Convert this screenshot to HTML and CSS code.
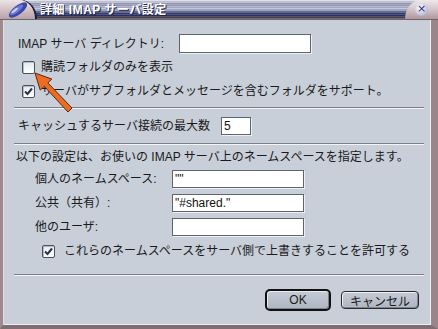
FILE: index.html
```html
<!DOCTYPE html>
<html lang="ja">
  <head>
    <meta charset="UTF-8" />
    <title>詳細 IMAP サーバ設定</title>
    <link rel="stylesheet" href="styles.css">
  </head>
  <body>
    <div class="window">
      <div class="titlebar">
        <div class="title-tab">
          <svg width="26" height="18" viewBox="0 0 26 18">
            <g transform="rotate(-38 13 9)">
              <ellipse cx="13" cy="9" rx="11" ry="4.5" fill="#3a48a8" />
              <ellipse cx="12" cy="8" rx="8" ry="2.6" fill="#6c7ad6" />
              <ellipse cx="10" cy="7.4" rx="4" ry="1.2" fill="#c8d0ff" />
            </g>
          </svg>
        </div>
        <span class="title-text">詳細 IMAP サーバ設定</span>
        <div class="close-tab">
          <span class="close-btn">×</span>
        </div>
      </div>

      <div class="frame">
        <div class="content">
          <div class="row row-dir">
            <label class="lbl lbl-dir" for="dir">IMAP サーバ ディレクトリ:</label>
            <input class="field field-dir" id="dir" type="text" value="" />
          </div>

          <div class="row check-row">
            <span class="check"></span>
            <span class="check-label">購読フォルダのみを表示</span>
          </div>

          <div class="row check-row row-sub">
            <span class="check checked">
              <svg width="11" height="11" viewBox="0 0 11 11">
                <path d="M2 5.5 L4.5 8 L9 2.5" fill="none" stroke="#2c3440" stroke-width="2" />
              </svg>
            </span>
            <span class="check-label">サーバがサブフォルダとメッセージを含むフォルダをサポート。</span>
          </div>

          <div class="sep sep-1"></div>

          <div class="row row-cache">
            <label class="lbl lbl-cache" for="cache">キャッシュするサーバ接続の最大数</label>
            <input class="field field-cache" id="cache" type="text" value="5" />
          </div>

          <div class="sep sep-2"></div>

          <div class="row row-note">以下の設定は、お使いの IMAP サーバ上のネームスペースを指定します。</div>

          <div class="row ns-row ns-first">
            <label class="lbl lbl-ns" for="personal">個人のネームスペース:</label>
            <input class="field field-ns" id="personal" type="text" value='""' />
          </div>
          <div class="row ns-row">
            <label class="lbl lbl-ns" for="public">公共（共有）:</label>
            <input class="field field-ns" id="public" type="text" value='"#shared."' />
          </div>
          <div class="row ns-row">
            <label class="lbl lbl-ns" for="other">他のユーザ:</label>
            <input class="field field-ns" id="other" type="text" value="" />
          </div>

          <div class="row check-row row-override">
            <span class="check checked">
              <svg width="11" height="11" viewBox="0 0 11 11">
                <path d="M2 5.5 L4.5 8 L9 2.5" fill="none" stroke="#2c3440" stroke-width="2" />
              </svg>
            </span>
            <span class="check-label">これらのネームスペースをサーバ側で上書きすることを許可する</span>
          </div>

          <div class="sep sep-3"></div>

          <div class="buttons">
            <button class="btn btn-ok">OK</button>
            <button class="btn btn-cancel">キャンセル</button>
          </div>
        </div>
      </div>

      <!-- callout arrow over the dialog -->
      <svg class="arrow" width="438" height="329" viewBox="0 0 438 329">
        <polygon
          points="35,73 51.8,79.1 47.8,82.9 72,108 68,112 44.2,86.3 40.2,90.1"
          fill="#ec6c24"
          stroke="#5a2a10"
          stroke-width="1"
          stroke-linejoin="round"
        />
      </svg>
    </div>
  </body>
</html>
```

FILE: styles.css
```css
* {
  margin: 0;
  padding: 0;
  box-sizing: border-box;
}

body {
  background-color: #c8cfd8;
  font-family: "Liberation Sans", "Noto Sans CJK JP", sans-serif;
  font-size: 12px;
  color: #1a1a1a;
}

.window {
  width: 438px;
  height: 329px;
  position: relative;
  overflow: hidden;
}

/* title bar */
.titlebar {
  height: 20px;
  display: flex;
  align-items: center;
  position: relative;
  background:
    repeating-linear-gradient(to bottom, rgba(255, 255, 255, 0.14) 0 1px, rgba(0, 0, 0, 0.08) 1px 2px),
    linear-gradient(to bottom, #e2e2ea 0, #c6c8d8 2px, #8e94b6 4px, #aeb2ca 7px, #c2c4d6 9px, #7e84aa 11px, #3c4476 13px, #2a3162 16px, #54464e 18px, #8a787c 20px);
}

.title-tab {
  width: 35px;
  height: 19px;
  align-self: flex-start;
  display: flex;
  align-items: center;
  justify-content: center;
  border-top-right-radius: 16px 19px;
  background: linear-gradient(to bottom, #eee4e6 0, #d8c8cc 40%, #b8a2a8 100%);
  box-shadow: 2px 0 0 #1c1c30;
}

.title-text {
  margin-left: 5px;
  color: #ffffff;
  font-weight: bold;
  font-size: 12px;
  line-height: 14px;
  letter-spacing: 0.5px;
  text-shadow: 1px 1px 0 #1c2248;
}

.close-tab {
  margin-left: auto;
  width: 33px;
  height: 19px;
  align-self: flex-start;
  display: flex;
  align-items: center;
  justify-content: center;
  border-top-left-radius: 16px 19px;
  background: linear-gradient(to bottom, #f0e8ea 0, #d6c8cc 45%, #ad989e 100%);
}

.close-btn {
  width: 13px;
  height: 13px;
  border-radius: 50%;
  background: radial-gradient(circle at 40% 35%, #ffffff 0, #c4c6dc 60%, #8c90b0 100%);
  color: #2a2f6a;
  font-size: 11px;
  line-height: 12px;
  text-align: center;
  font-family: "DejaVu Sans", sans-serif;
}

/* dialog body */
.frame {
  height: 309px;
  border-left: 3px solid #9e8a8e;
  border-right: 7px solid #9a868a;
  border-bottom: 4px solid #7e6e72;
  box-shadow: inset 1px 0 0 #e4dcde, inset -1px -1px 0 #eef0f2;
  background-color: #c8cfd8;
}

.content {
  padding: 14px 7px 0 11px;
  display: flex;
  flex-direction: column;
}

.row {
  display: flex;
  align-items: center;
  line-height: 14px;
  white-space: nowrap;
}

.lbl {
  flex: none;
}

.field {
  flex: none;
  height: 18px;
  background: #ffffff;
  border: 1px solid #5e656e;
  box-shadow: 1px 1px 0 #eef1f4;
  font-family: "Liberation Sans", sans-serif;
  font-size: 12px;
  color: #111;
  padding: 0 2px;
  outline: none;
}

.row-dir {
  height: 19px;
}

.lbl-dir {
  width: 165px;
  padding-left: 4px;
}

.field-dir {
  width: 132px;
  height: 19px;
}

.check-row {
  height: 14px;
  margin-top: 7px;
}

.check-row .check {
  margin-left: 8px;
}

.row-sub {
  margin-top: 10px;
}

.check {
  flex: none;
  width: 13px;
  height: 13px;
  border: 1px solid #4c525c;
  border-radius: 2px;
  background: linear-gradient(to bottom, #e4eaf2, #ffffff);
  box-shadow: inset 1px 1px 0 #b4bcc8;
  display: flex;
  align-items: center;
  justify-content: center;
}

.check-label {
  margin-left: 6px;
}

.sep {
  height: 2px;
  border-top: 1px solid #7a818a;
  border-bottom: 1px solid #f2f4f6;
}

.sep-1 {
  margin-top: 9px;
}

.row-cache {
  height: 18px;
  margin-top: 8px;
}

.lbl-cache {
  width: 207px;
  padding-left: 4px;
}

.field-cache {
  width: 30px;
}

.sep-2 {
  margin-top: 8px;
}

.row-note {
  height: 14px;
  margin-top: 5px;
  padding-left: 2px;
}

.ns-row {
  height: 18px;
  margin-top: 6px;
}

.lbl-ns {
  width: 158px;
  padding-left: 21px;
}

.field-ns {
  width: 132px;
}

.row-override {
  margin-top: 8px;
}

.row-override .check {
  margin-left: 28px;
}

.row-override .check-label {
  margin-left: 9px;
}

.sep-3 {
  margin-top: 16px;
}

.buttons {
  margin-top: 13px;
  height: 22px;
  display: flex;
  justify-content: flex-end;
  align-items: center;
  gap: 10px;
  padding-right: 5px;
}

.btn {
  font-family: "Liberation Sans", "Noto Sans CJK JP", sans-serif;
  font-size: 12px;
  color: #1a1a1a;
  background: linear-gradient(to bottom, #c4cbd6, #aeb6c2);
  cursor: pointer;
}

.btn-ok {
  width: 66px;
  height: 22px;
  border: 2px solid #111;
  border-radius: 5px;
  box-shadow: inset 1px 1px 0 #e6eaf0, inset -1px -1px 0 #7c848e;
}

.btn-cancel {
  width: 78px;
  height: 18px;
  border: 1px solid #2a2a2a;
  border-radius: 4px;
  box-shadow: inset 1px 1px 0 #eef1f5, inset -1px -1px 0 #7c848e;
}

.arrow {
  position: absolute;
  left: 0;
  top: 0;
  pointer-events: none;
}
```
